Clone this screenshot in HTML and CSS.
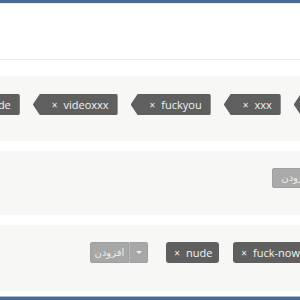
FILE: index.html
```html
<!DOCTYPE html>
<html lang="fa" dir="rtl">
<head>
  <meta charset="UTF-8">
  <title>فیلتر کلمات</title>
  <link rel="stylesheet" href="styles.css">
</head>
<body>
  <div class="topbar"></div>
  <header class="head"></header>

  <section class="panel panel-first">
    <div class="row row-words">
      <span class="tag tag-arrow"><span class="x">×</span>porn</span>
      <span class="tag tag-arrow"><span class="x">×</span>xxx</span>
      <span class="tag tag-arrow"><span class="x">×</span>fuckyou</span>
      <span class="tag tag-arrow"><span class="x">×</span>videoxxx</span>
      <span class="tag tag-arrow"><span class="x">×</span>nude</span>
    </div>
  </section>

  <section class="panel">
    <div class="row row-add">
      <button class="btn">افزودن</button>
    </div>
  </section>

  <section class="panel panel-last">
    <div class="row row-blocked">
      <span class="tag"><span class="x">×</span>fuck-now</span>
      <span class="tag"><span class="x">×</span>nude</span>
      <div class="btn-group">
        <button class="btn btn-caret"><span class="caret"></span></button>
        <button class="btn">افزودن</button>
      </div>
    </div>
  </section>

  <footer class="bottombar"></footer>
</body>
</html>
```

FILE: styles.css
```css
html, body {
  margin: 0;
  height: 300px;
  overflow: hidden;
}

body {
  font-family: "Open Sans", "DejaVu Sans", sans-serif;
  background: #fff;
}

.topbar {
  height: 3px;
  background: #4b6995;
  border-bottom: 1px solid #e6ebf2;
}

.head {
  height: 55px;
  border-bottom: 1px solid #ececec;
  margin-bottom: 16px;
}

.panel {
  background: #f7f7f6;
  padding: 17px 0 27px;
  margin-bottom: 10px;
}

.panel-first {
  padding: 18px 0 26px;
}

.panel-last {
  padding-bottom: 28px;
  margin-bottom: 5px;
}

.row {
  display: flex;
  align-items: center;
}

.row-words {
  gap: 13px;
  margin-right: -58px;
}

.row-add {
  margin-right: -20px;
}

.row-blocked {
  gap: 14px;
  margin-right: -7px;
}

.row-blocked .btn-group {
  margin-right: 4px;
}

.tag {
  direction: ltr;
  display: inline-flex;
  align-items: center;
  flex-shrink: 0;
  height: 21px;
  padding: 0 7px 0 8px;
  background: #5f5f5f;
  color: #f2f2f2;
  font-size: 11px;
  border-radius: 3px;
  white-space: nowrap;
}

.tag .x {
  margin-right: 6px;
  font-size: 10px;
}

.tag-arrow {
  padding: 0 9px 0 19px;
  border-radius: 0 2px 2px 0;
  clip-path: polygon(7px 0, 100% 0, 100% 100%, 7px 100%, 0 50%);
}

.tag-arrow .x {
  margin-right: 6px;
}

.btn {
  height: 20px;
  padding: 0 8px;
  background: #aaa;
  border: 1px solid #a0a0a0;
  border-radius: 2px;
  color: #ececec;
  font-family: "DejaVu Sans", sans-serif;
  font-size: 10px;
  line-height: 18px;
  flex-shrink: 0;
}

.btn-group {
  display: flex;
  flex-shrink: 0;
}

.btn-group .btn {
  height: 21px;
  padding: 0 4px;
  background: #a7a7a7;
}

.btn-group .btn-caret {
  width: 19px;
  padding: 0;
  border-radius: 0 2px 2px 0;
  border-left-color: #bcbcbc;
}

.btn-group .btn:last-child {
  border-radius: 2px 0 0 2px;
}

.caret {
  display: inline-block;
  vertical-align: middle;
  border-top: 3px solid #eee;
  border-left: 3px solid transparent;
  border-right: 3px solid transparent;
}

.bottombar {
  height: 3px;
  background: #4b6995;
  border-top: 1px solid #a9bbd1;
}
```
